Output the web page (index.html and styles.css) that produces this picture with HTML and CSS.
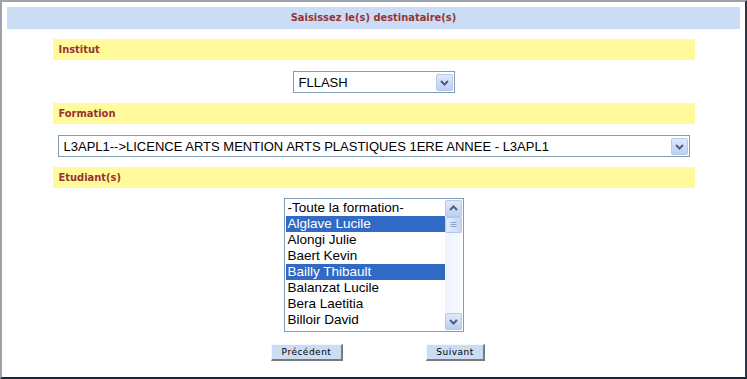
FILE: index.html
```html
<!DOCTYPE html>
<html lang="fr">
<head>
    <meta charset="UTF-8">
    <title>Saisissez le(s) destinataire(s)</title>
    <link rel="stylesheet" href="styles.css">
</head>
<body>

<div class="frame">
    <div class="title-bar">Saisissez le(s) destinataire(s)</div>

    <div class="section-bar">Institut</div>
    <div class="row-center">
        <div class="select select-institut">
            <span class="select-text">FLLASH</span>
            <span class="drop-btn">
                <svg width="15" height="15" viewBox="0 0 15 15"><path d="M4 6 L7.5 9.5 L11 6" fill="none" stroke="#4d6185" stroke-width="2"/></svg>
            </span>
        </div>
    </div>

    <div class="section-bar">Formation</div>
    <div class="row-center">
        <div class="select select-formation">
            <span class="select-text">L3APL1--&gt;LICENCE ARTS MENTION ARTS PLASTIQUES 1ERE ANNEE - L3APL1</span>
            <span class="drop-btn">
                <svg width="15" height="15" viewBox="0 0 15 15"><path d="M4 6 L7.5 9.5 L11 6" fill="none" stroke="#4d6185" stroke-width="2"/></svg>
            </span>
        </div>
    </div>

    <div class="section-bar">Etudiant(s)</div>
    <div class="row-center">
        <div class="listbox">
            <div class="list-items">
                <div class="item">-Toute la formation-</div>
                <div class="item selected">Alglave Lucile</div>
                <div class="item">Alongi Julie</div>
                <div class="item">Baert Kevin</div>
                <div class="item selected">Bailly Thibault</div>
                <div class="item">Balanzat Lucile</div>
                <div class="item">Bera Laetitia</div>
                <div class="item">Billoir David</div>
            </div>
            <div class="scrollbar">
                <span class="scroll-btn">
                    <svg width="15" height="15" viewBox="0 0 15 15"><path d="M4 9 L7.5 5.5 L11 9" fill="none" stroke="#4d6185" stroke-width="2"/></svg>
                </span>
                <span class="scroll-thumb">
                    <svg width="15" height="14" viewBox="0 0 15 14"><path d="M4.5 4.5 H10.5 M4.5 6.5 H10.5 M4.5 8.5 H10.5" stroke="#8ea3c8" stroke-width="1"/></svg>
                </span>
                <span class="scroll-track"></span>
                <span class="scroll-btn">
                    <svg width="15" height="15" viewBox="0 0 15 15"><path d="M4 6 L7.5 9.5 L11 6" fill="none" stroke="#4d6185" stroke-width="2"/></svg>
                </span>
            </div>
        </div>
    </div>

    <div class="buttons">
        <button type="button" class="btn btn-prev">Précédent</button>
        <button type="button" class="btn btn-next">Suivant</button>
    </div>
</div>

</body>
</html>
```

FILE: styles.css
```css
body {
    margin: 0;
    background: #fff;
    font-family: "Liberation Sans", Arial, sans-serif;
}
.frame {
    box-sizing: border-box;
    width: 747px;
    height: 379px;
    padding: 5px;
    border-top: 2px solid #9ea3ab;
    border-left: 2px solid #9ea3ab;
    border-right: 2px solid #2c3441;
    border-bottom: 2px solid #1e2633;
    background: #fff;
}
.title-bar {
    height: 22px;
    line-height: 22px;
    background: #cbdcf5;
    color: #993333;
    text-align: center;
    font-family: "DejaVu Sans Condensed", "DejaVu Sans", sans-serif;
    font-weight: bold;
    font-size: 11px;
}
.section-bar {
    width: 632px;
    height: 21px;
    line-height: 21px;
    margin: 10px auto 0;
    padding-left: 6px;
    padding-right: 4px;
    background: #fffb9b;
    color: #993333;
    font-family: "DejaVu Sans Condensed", "DejaVu Sans", sans-serif;
    font-weight: bold;
    font-size: 11px;
}
.row-center {
    display: flex;
    justify-content: center;
    margin-top: 11px;
}
.select {
    box-sizing: border-box;
    height: 22px;
    display: flex;
    align-items: center;
    justify-content: space-between;
    border: 1px solid #7f9db9;
    background: #fff;
    padding: 0 1px 0 5px;
    font-size: 13px;
    color: #000;
}
.select-institut {
    width: 162px;
}
.select-formation {
    width: 632px;
}
.select-text {
    white-space: nowrap;
}
.drop-btn, .scroll-btn {
    box-sizing: border-box;
    width: 17px;
    height: 17px;
    display: flex;
    align-items: center;
    justify-content: center;
    border: 1px solid #b5c8ea;
    border-radius: 2px;
    background: linear-gradient(#dfe9fb, #bccff2);
}
.listbox {
    box-sizing: border-box;
    width: 180px;
    height: 134px;
    display: flex;
    border: 1px solid #7f9db9;
    padding: 1px;
    background: #fff;
    margin-top: -1px;
}
.list-items {
    flex: 1;
}
.item {
    height: 16px;
    line-height: 16px;
    padding-left: 2px;
    font-size: 13.5px;
    color: #000;
    white-space: nowrap;
}
.item.selected {
    background: #316ac5;
    color: #fff;
}
.scrollbar {
    width: 17px;
    display: flex;
    flex-direction: column;
    background: #f0f4fc;
}
.scroll-thumb {
    box-sizing: border-box;
    height: 16px;
    display: flex;
    align-items: center;
    justify-content: center;
    border: 1px solid #b5c8ea;
    border-radius: 2px;
    background: linear-gradient(90deg, #e4ecfc, #c6d6f5);
}
.scroll-track {
    flex: 1;
    background: linear-gradient(90deg, #eef3fd, #f7f9fe);
}
.buttons {
    display: flex;
    justify-content: center;
    gap: 83px;
    padding-left: 9px;
    margin-top: 12px;
}
.btn {
    box-sizing: border-box;
    height: 17px;
    padding: 0;
    border-top: 1px solid #f4f7fd;
    border-left: 1px solid #f4f7fd;
    border-right: 2px solid #7a7a7a;
    border-bottom: 2px solid #7a7a7a;
    background: #cbdcf5;
    color: #000;
    font-family: "DejaVu Sans", Verdana, sans-serif;
    font-size: 9px;
    letter-spacing: 0.5px;
    line-height: 13px;
}
.btn-prev {
    width: 72px;
}
.btn-next {
    width: 59px;
}
```
